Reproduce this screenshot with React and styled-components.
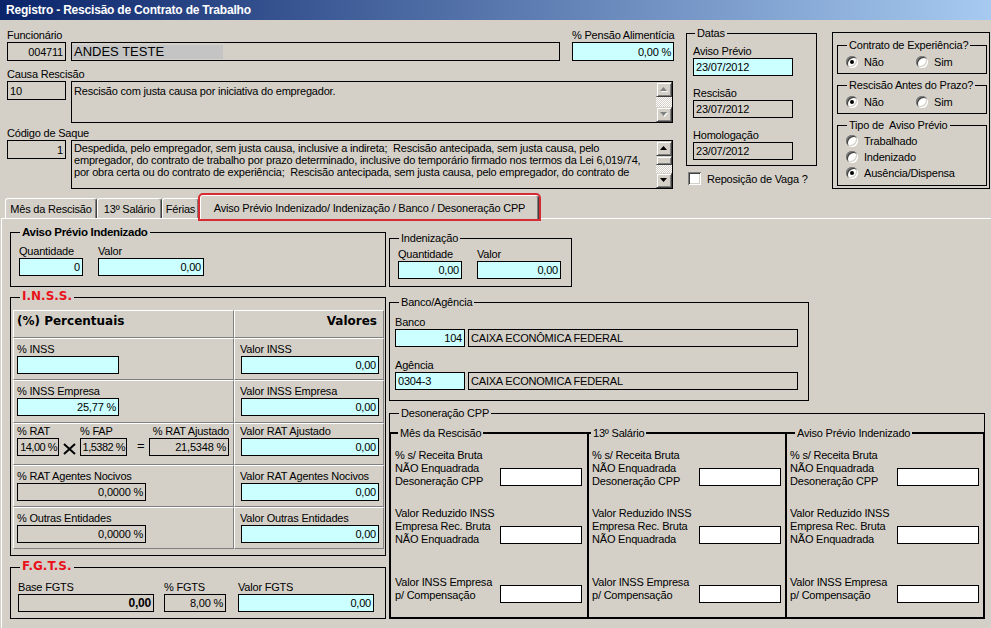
import React from "react";
import styled, { createGlobalStyle, css } from "styled-components";

const FACE = "#d4d0c8";
const CYAN = "#ccffff";

const GlobalStyle = createGlobalStyle`
  html, body { margin: 0; padding: 0; background: ${FACE}; }
  *, *::before, *::after { box-sizing: border-box; }
`;

const Window = styled.div`
  width: 991px;
  height: 628px;
  overflow: hidden;
  background: ${FACE};
  font-family: "Liberation Sans", Arial, sans-serif;
  font-size: 11px;
  letter-spacing: -0.2px;
  color: #000;
`;

const TitleBar = styled.div`
  height: 20px;
  padding-left: 6px;
  display: flex;
  align-items: center;
  background: linear-gradient(90deg, #0a246a, #a6caf0);
  color: #fff;
  font-weight: bold;
  font-size: 12px;
  letter-spacing: -0.2px;
`;

const Header = styled.div`
  height: 173px;
  display: flex;
  align-items: flex-start;
  padding-left: 7px;
`;

const MainCol = styled.div`
  width: 666px;
  padding-top: 8px;
`;

const Row = styled.div`
  display: flex;
  align-items: ${(p) => p.$align || "flex-end"};
  gap: ${(p) => p.$gap || 0}px;
  margin-top: ${(p) => p.$mt || 0}px;
`;

const Field = styled.div`
  display: flex;
  flex-direction: column;
  margin-left: ${(p) => p.$ml || 0}px;
  margin-top: ${(p) => p.$mt || 0}px;
`;

const Label = styled.div`
  height: ${(p) => p.$h || 14}px;
  line-height: ${(p) => p.$h || 14}px;
  white-space: nowrap;
  text-align: ${(p) => (p.$right ? "right" : "left")};
`;

const Box = styled.div`
  width: ${(p) => p.$w}px;
  height: ${(p) => p.$h || 18}px;
  flex-shrink: 0;
  background: ${(p) => (p.$bg === "cyan" ? CYAN : p.$bg === "white" ? "#fff" : FACE)};
  border: 1px solid #000;
  display: flex;
  align-items: center;
  justify-content: ${(p) => (p.$left ? "flex-start" : "flex-end")};
  padding: 0 2px;
  margin-bottom: ${(p) => p.$mb || 0}px;
  margin-left: ${(p) => p.$ml || 0}px;
  white-space: nowrap;
  overflow: hidden;
  ${(p) =>
    p.$narrow &&
    css`
      padding: 0 1px;
      letter-spacing: -0.5px;
    `}
  ${(p) =>
    p.$bold &&
    css`
      font-weight: bold;
      font-size: 12px;
    `}
`;

const NameBox = styled(Box)`
  padding: 0;
  font-size: 13px;
  letter-spacing: 0;
`;

const Selected = styled.span`
  width: 151px;
  height: 14px;
  line-height: 14px;
  padding-left: 2px;
  background: #c4c4c4;
`;

const Memo = styled.div`
  width: 603px;
  height: ${(p) => p.$h}px;
  border: 1px solid #000;
  display: flex;
  background: ${FACE};
`;

const MemoText = styled.div`
  flex: 1;
  padding: ${(p) => p.$pt || 0}px 3px 0 2px;
  line-height: ${(p) => p.$lh || 12}px;
  white-space: pre;
  overflow: hidden;
`;

const ScrollBar = styled.div`
  width: 16px;
  display: flex;
  flex-direction: column;
`;

const ScrollBtn = styled.div`
  height: ${(p) => p.$h}px;
  flex-shrink: 0;
  background: ${FACE};
  border: 1px solid;
  border-color: ${FACE} #404040 #404040 ${FACE};
  box-shadow: inset 1px 1px #fff, inset -1px -1px #808080;
  display: flex;
  align-items: center;
  justify-content: center;
`;

const Track = styled.div`
  flex: 1;
  background: repeating-conic-gradient(#fff 0 25%, ${FACE} 0 50%) 0 0 / 2px 2px;
`;

const Arrow = ({ down, off }) => {
  const pts = down ? "0,0 7,0 3.5,4" : "0,4 7,4 3.5,0";
  return (
    <svg width="8" height="5" viewBox="0 0 8 5">
      {off && <polygon points={pts} fill="#fff" transform="translate(1,1)" />}
      <polygon points={pts} fill={off ? "#808080" : "#000"} />
    </svg>
  );
};

const Group = styled.div`
  position: relative;
  width: ${(p) => p.$w}px;
  height: ${(p) => p.$h}px;
  flex-shrink: 0;
  margin-top: ${(p) => p.$mt || 0}px;
  border: 1px solid #000;
  padding: ${(p) => p.$pad || "0"};
`;

const Legend = styled.span`
  position: absolute;
  top: -7px;
  left: ${(p) => (p.$x === undefined ? 9 : p.$x)}px;
  padding: 0 2px;
  background: ${FACE};
  line-height: 13px;
  white-space: pre;
  ${(p) =>
    p.$bold &&
    css`
      font-weight: bold;
      font-size: 11.5px;
      letter-spacing: -0.3px;
    `}
  ${(p) =>
    p.$red &&
    css`
      top: -9px;
      line-height: 14px;
      font-family: "DejaVu Sans", sans-serif;
      font-weight: bold;
      font-size: 12px;
      letter-spacing: 0;
      color: #e8121b;
    `}
`;

const DatasCol = styled.div`
  margin: 13px 0 0 13px;
  width: 131px;
  display: flex;
  flex-direction: column;
`;

const CheckRow = styled.div`
  display: flex;
  align-items: center;
  gap: 6px;
  margin: 6px 0 0 2px;
`;

const CheckBox = styled.span`
  width: 13px;
  height: 13px;
  background: #fff;
  box-shadow: inset 1px 1px #808080, inset -1px -1px #fff, inset 2px 2px #404040,
    inset -2px -2px ${FACE};
`;

const OptBox = styled.div`
  width: 158px;
  height: 157px;
  margin: 12px 0 0 15px;
  border: 1px solid #000;
  padding: 12px 0 0 4px;
  display: flex;
  flex-direction: column;
  gap: 11px;
`;

const OptRow = styled.div`
  display: flex;
  align-items: center;
  height: 16px;
`;

const Option = styled.div`
  display: flex;
  align-items: center;
  gap: 6px;
  width: ${(p) => (p.$w ? `${p.$w}px` : "auto")};
`;

const Radio = styled.span`
  position: relative;
  width: 12px;
  height: 12px;
  flex-shrink: 0;
  border-radius: 50%;
  background: #fff;
  box-shadow: inset 1px 1px #808080, inset -1px -1px #fff, inset 2px 2px #404040,
    inset -2px -2px ${FACE};
  &::after {
    content: "";
    display: ${(p) => (p.$on ? "block" : "none")};
    position: absolute;
    left: 4px;
    top: 4px;
    width: 4px;
    height: 4px;
    border-radius: 50%;
    background: #000;
  }
`;

const TabStrip = styled.div`
  position: relative;
  z-index: 1;
  height: 25px;
  display: flex;
  align-items: flex-end;
  padding-left: 5px;
`;

const Tab = styled.div`
  width: ${(p) => p.$w}px;
  height: ${(p) => (p.$active ? 24 : 20)}px;
  margin-bottom: ${(p) => (p.$active ? -1 : 0)}px;
  margin-left: ${(p) => p.$ml || 0}px;
  background: ${FACE};
  border-top: 1px solid #fff;
  border-left: 1px solid #fff;
  border-right: 1px solid #404040;
  box-shadow: inset -1px 0 #808080;
  border-radius: 3px 3px 0 0;
  display: flex;
  align-items: center;
  justify-content: center;
  white-space: nowrap;
  ${(p) =>
    p.$active &&
    css`
      outline: 2px solid #d62b33;
    `}
`;

const Panel = styled.div`
  height: 410px;
  margin-left: 1px;
  border-top: 1px solid #fff;
  border-left: 1px solid #fff;
  display: flex;
  gap: 3px;
  padding-left: 8px;
`;

const Column = styled.div`
  width: ${(p) => p.$w}px;
  padding-top: ${(p) => p.$pt}px;
  display: flex;
  flex-direction: column;
`;

const Table = styled.div`
  display: grid;
  grid-template-columns: 221px 150px;
  grid-template-rows: 28px 42px 43px 42px 42px 42px;
  margin-left: 2px;
`;

const Cell = styled.div`
  border-top: 1px solid #fff;
  border-left: 1px solid #fff;
  border-right: 1px solid #808080;
  border-bottom: 1px solid #808080;
  padding: ${(p) => (p.$tight ? 1 : 3)}px ${(p) => (p.$head && p.$right ? 6 : 0)}px 0
    ${(p) => (p.$right ? 5 : 3)}px;
  display: flex;
  flex-direction: column;
  align-items: ${(p) => (p.$head && p.$right ? "flex-end" : "stretch")};
`;

const HeadText = styled.div`
  font-family: "DejaVu Sans", sans-serif;
  font-weight: bold;
  font-size: 12px;
  letter-spacing: 0;
  line-height: 14px;
`;

const Times = styled.svg`
  margin: 0 3px 1px 3px;
  flex-shrink: 0;
`;

const Equals = styled.span`
  width: 12px;
  margin: 0 0 2px 10px;
  font-size: 13px;
  line-height: 16px;
`;

const SubRow = styled.div`
  flex: 1;
  display: flex;
  margin: 18px -1px -1px -1px;
`;

const DesonGroup = styled(Group)`
  display: flex;
  flex-direction: column;
`;

const Sub = styled.div`
  position: relative;
  width: ${(p) => p.$w}px;
  flex-shrink: 0;
  border: 2px solid #000;
  border-left-width: ${(p) => (p.$first ? 2 : 0)}px;
  padding: 15px 0 0 ${(p) => (p.$first ? 4 : 3)}px;
  display: flex;
  flex-direction: column;
`;

const Entry = styled.div`
  display: flex;
  align-items: flex-end;
  margin-top: ${(p) => p.$mt || 0}px;
`;

const EntryLabel = styled.div`
  width: ${(p) => p.$w}px;
  padding-bottom: ${(p) => p.$pb || 0}px;
  line-height: 13px;
  white-space: nowrap;
`;

const entries = [
  { mt: 0, pb: 0, lines: ["% s/ Receita Bruta", "NÃO Enquadrada", "Desoneração CPP"] },
  { mt: 19, pb: 0, lines: ["Valor Reduzido INSS", "Empresa Rec. Bruta", "NÃO Enquadrada"] },
  { mt: 30, pb: 3, lines: ["Valor INSS Empresa", "p/ Compensação"] },
];

const subs = [
  { title: "Mês da Rescisão", w: 200, first: true, lx: 7, lw: 105 },
  { title: "13º Salário", w: 198, lx: 2, lw: 107 },
  { title: "Aviso Prévio Indenizado", w: 198, lx: 8, lw: 107 },
];

const saque = [
  "Despedida, pelo empregador, sem justa causa, inclusive a indireta;  Rescisão antecipada, sem justa causa, pelo",
  "empregador, do contrato de trabalho por prazo determinado, inclusive do temporário firmado nos termos da Lei 6,019/74,",
  "por obra certa ou do contrato de experiência;  Rescisão antecipada, sem justa causa, pelo empregador, do contrato de",
];

const ValueCell = ({ label, value, tight }) => (
  <Cell $right $tight={tight}>
    <Label $h={tight ? 13 : 14}>{label}</Label>
    <Box $w={138} $bg="cyan" $ml={1}>
      {value}
    </Box>
  </Cell>
);

const App = () => {
  return (
    <Window>
      <GlobalStyle />
      <TitleBar>Registro - Rescisão de Contrato de Trabalho</TitleBar>

      <Header>
        <MainCol>
          <Row>
            <Field>
              <Label>Funcionário</Label>
              <Row $gap={5}>
                <Box $w={59} $h={19}>004711</Box>
                <NameBox $w={489} $h={19} $left>
                  <Selected>ANDES TESTE</Selected>
                </NameBox>
              </Row>
            </Field>
            <Field $ml={12}>
              <Label>% Pensão Alimentícia</Label>
              <Box $w={102} $h={19} $bg="cyan">0,00 %</Box>
            </Field>
          </Row>

          <Field $mt={6}>
            <Label>Causa Rescisão</Label>
            <Row $align="flex-start" $gap={5}>
              <Box $w={59} $h={19} $left>10</Box>
              <Memo $h={42}>
                <MemoText $pt={3}>Rescisão com justa causa por iniciativa do empregador.</MemoText>
                <ScrollBar>
                  <ScrollBtn $h={15}>
                    <Arrow off />
                  </ScrollBtn>
                  <Track />
                  <ScrollBtn $h={15}>
                    <Arrow down off />
                  </ScrollBtn>
                </ScrollBar>
              </Memo>
            </Row>
          </Field>

          <Field $mt={3}>
            <Label>Código de Saque</Label>
            <Row $align="flex-start" $gap={5}>
              <Box $w={59} $h={19}>1</Box>
              <Memo $h={49}>
                <MemoText $pt={1} $lh={12}>
                  {saque.map((l) => (
                    <div key={l}>{l}</div>
                  ))}
                </MemoText>
                <ScrollBar>
                  <ScrollBtn $h={15}>
                    <Arrow />
                  </ScrollBtn>
                  <ScrollBtn $h={9} />
                  <Track />
                  <ScrollBtn $h={15}>
                    <Arrow down />
                  </ScrollBtn>
                </ScrollBar>
              </Memo>
            </Row>
          </Field>
        </MainCol>

        <DatasCol>
          <Group $w={131} $h={133} $pad="10px 0 0 6px">
            <Legend $x={8}>Datas</Legend>
            <Field>
              <Label>Aviso Prévio</Label>
              <Box $w={100} $bg="cyan" $left>23/07/2012</Box>
            </Field>
            <Field $mt={10}>
              <Label>Rescisão</Label>
              <Box $w={100} $left>23/07/2012</Box>
            </Field>
            <Field $mt={10}>
              <Label>Homologação</Label>
              <Box $w={100} $left>23/07/2012</Box>
            </Field>
          </Group>
          <CheckRow>
            <CheckBox />
            <span>Reposição de Vaga ?</span>
          </CheckRow>
        </DatasCol>

        <OptBox>
          <Group $w={150} $h={29} $pad="8px 0 0 8px">
            <Legend>Contrato de Experiência?</Legend>
            <OptRow>
              <Option $w={70}>
                <Radio $on />
                Não
              </Option>
              <Option>
                <Radio />
                Sim
              </Option>
            </OptRow>
          </Group>
          <Group $w={150} $h={29} $pad="8px 0 0 8px">
            <Legend>Rescisão Antes do Prazo?</Legend>
            <OptRow>
              <Option $w={70}>
                <Radio $on />
                Não
              </Option>
              <Option>
                <Radio />
                Sim
              </Option>
            </OptRow>
          </Group>
          <Group $w={150} $h={61} $pad="7px 0 0 8px">
            <Legend>Tipo de  Aviso Prévio</Legend>
            <OptRow>
              <Option>
                <Radio />
                Trabalhado
              </Option>
            </OptRow>
            <OptRow>
              <Option>
                <Radio />
                Indenizado
              </Option>
            </OptRow>
            <OptRow>
              <Option>
                <Radio $on />
                Ausência/Dispensa
              </Option>
            </OptRow>
          </Group>
        </OptBox>
      </Header>

      <TabStrip>
        <Tab $w={92}>Mês da Rescisão</Tab>
        <Tab $w={65}>13º Salário</Tab>
        <Tab $w={37}>Férias</Tab>
        <Tab $w={339} $ml={1} $active>
          Aviso Prévio Indenizado/ Indenização / Banco / Desoneração CPP
        </Tab>
      </TabStrip>

      <Panel>
        <Column $w={376} $pt={13}>
          <Group $w={376} $h={55} $pad="11px 0 0 8px">
            <Legend $bold>Aviso Prévio Indenizado</Legend>
            <Row $gap={15}>
              <Field>
                <Label>Quantidade</Label>
                <Box $w={64} $bg="cyan">0</Box>
              </Field>
              <Field>
                <Label>Valor</Label>
                <Box $w={106} $bg="cyan">0,00</Box>
              </Field>
            </Row>
          </Group>

          <Group $w={376} $h={259} $mt={10} $pad="12px 0 0 0">
            <Legend $red>I.N.S.S.</Legend>
            <Table>
              <Cell>
                <HeadText>(%) Percentuais</HeadText>
              </Cell>
              <Cell $right $head>
                <HeadText>Valores</HeadText>
              </Cell>

              <Cell>
                <Label>% INSS</Label>
                <Box $w={102} $bg="cyan" />
              </Cell>
              <ValueCell label="Valor INSS" value="0,00" />

              <Cell>
                <Label>% INSS Empresa</Label>
                <Box $w={102} $bg="cyan">25,77 %</Box>
              </Cell>
              <ValueCell label="Valor INSS Empresa" value="0,00" />

              <Cell $tight>
                <Row>
                  <Field>
                    <Label $h={13}>% RAT</Label>
                    <Box $w={42} $narrow>14,00 %</Box>
                  </Field>
                  <Times width="15" height="12" viewBox="0 0 15 12">
                    <path d="M2 1 L13 11 M13 1 L2 11" stroke="#000" strokeWidth="2" fill="none" />
                  </Times>
                  <Field>
                    <Label $h={13}>% FAP</Label>
                    <Box $w={47} $narrow>1,5382 %</Box>
                  </Field>
                  <Equals>=</Equals>
                  <Field>
                    <Label $h={13} $right>% RAT Ajustado</Label>
                    <Box $w={80}>21,5348 %</Box>
                  </Field>
                </Row>
              </Cell>
              <ValueCell label="Valor RAT Ajustado" value="0,00" tight />

              <Cell>
                <Label>% RAT Agentes Nocivos</Label>
                <Box $w={129}>0,0000 %</Box>
              </Cell>
              <ValueCell label="Valor RAT Agentes Nocivos" value="0,00" />

              <Cell>
                <Label>% Outras Entidades</Label>
                <Box $w={129}>0,0000 %</Box>
              </Cell>
              <ValueCell label="Valor Outras Entidades" value="0,00" />
            </Table>
          </Group>

          <Group $w={376} $h={52} $mt={11} $pad="12px 0 0 7px">
            <Legend $red>F.G.T.S.</Legend>
            <Row>
              <Field>
                <Label>Base FGTS</Label>
                <Box $w={136} $bold>0,00</Box>
              </Field>
              <Field $ml={10}>
                <Label>% FGTS</Label>
                <Box $w={62}>8,00 %</Box>
              </Field>
              <Field $ml={12}>
                <Label>Valor FGTS</Label>
                <Box $w={136} $bg="cyan">0,00</Box>
              </Field>
            </Row>
          </Group>
        </Column>

        <Column $w={596} $pt={19}>
          <Group $w={183} $h={49} $pad="8px 0 0 8px">
            <Legend>Indenização</Legend>
            <Row $gap={15}>
              <Field>
                <Label>Quantidade</Label>
                <Box $w={64} $bg="cyan">0,00</Box>
              </Field>
              <Field>
                <Label>Valor</Label>
                <Box $w={84} $bg="cyan">0,00</Box>
              </Field>
            </Row>
          </Group>

          <Group $w={420} $h={99} $mt={15} $pad="12px 0 0 5px">
            <Legend>Banco/Agência</Legend>
            <Field>
              <Label>Banco</Label>
              <Row $gap={3}>
                <Box $w={70} $bg="cyan">104</Box>
                <Box $w={330} $left>CAIXA ECONÔMICA FEDERAL</Box>
              </Row>
            </Field>
            <Field $mt={11}>
              <Label>Agência</Label>
              <Row $gap={3}>
                <Box $w={70} $bg="cyan" $left>0304-3</Box>
                <Box $w={330} $left>CAIXA ECONOMICA FEDERAL</Box>
              </Row>
            </Field>
          </Group>

          <DesonGroup $w={596} $h={206} $mt={12}>
            <Legend>Desoneração CPP</Legend>
            <SubRow>
              {subs.map((s) => (
                <Sub key={s.title} $w={s.w} $first={s.first}>
                  <Legend $x={s.lx}>{s.title}</Legend>
                  {entries.map((e) => (
                    <Entry key={e.lines[0]} $mt={e.mt}>
                      <EntryLabel $w={s.lw} $pb={e.pb}>
                        {e.lines.map((l) => (
                          <div key={l}>{l}</div>
                        ))}
                      </EntryLabel>
                      <Box $w={82} $bg="white" $mb={2} />
                    </Entry>
                  ))}
                </Sub>
              ))}
            </SubRow>
          </DesonGroup>
        </Column>
      </Panel>
    </Window>
  );
};

export default App;
